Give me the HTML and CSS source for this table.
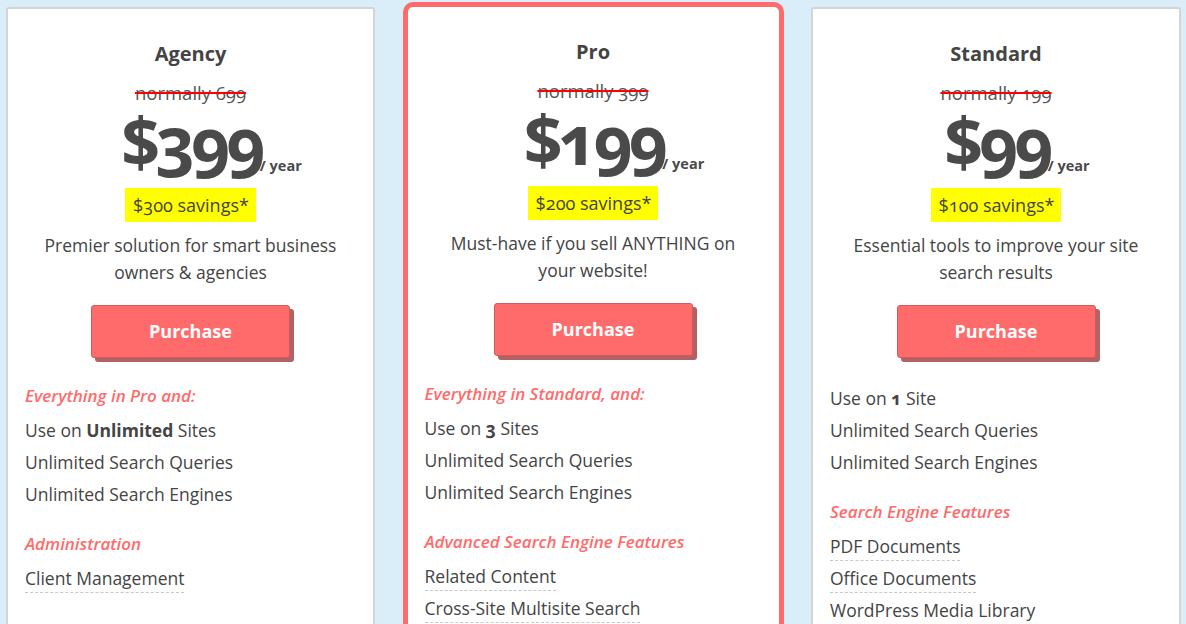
FILE: index.html
```html
<!DOCTYPE html>
<html lang="en">
<head>
<meta charset="utf-8">
<title>Pricing</title>
<link rel="stylesheet" href="styles.css">
</head>
<body>
<div class="plans">
  <section class="plan">
    <header class="plan-head">
      <h2 class="plan-name">Agency</h2>
      <div class="was"><s>normally 699</s></div>
      <div class="price"><span class="amount">$399</span><span class="per">/ year</span></div>
      <span class="save">$300 savings*</span>
      <p class="desc">Premier solution for smart business owners &amp; agencies</p>
      <a class="buy" href="#">Purchase</a>
    </header>
    <div class="features">
      <div class="group">
        <h3 class="group-title">Everything in Pro and:</h3>
        <ul class="items">
          <li><span>Use on <b>Unlimited</b> Sites</span></li>
          <li><span>Unlimited Search Queries</span></li>
          <li><span>Unlimited Search Engines</span></li>
        </ul>
      </div>
      <div class="group">
        <h3 class="group-title">Administration</h3>
        <ul class="items">
          <li class="tip"><span>Client Management</span></li>
        </ul>
      </div>
    </div>
  </section>

  <section class="plan featured">
    <header class="plan-head">
      <h2 class="plan-name">Pro</h2>
      <div class="was"><s>normally 399</s></div>
      <div class="price"><span class="amount">$199</span><span class="per">/ year</span></div>
      <span class="save">$200 savings*</span>
      <p class="desc">Must-have if you sell ANYTHING on your website!</p>
      <a class="buy" href="#">Purchase</a>
    </header>
    <div class="features">
      <div class="group">
        <h3 class="group-title">Everything in Standard, and:</h3>
        <ul class="items">
          <li><span>Use on <b>3</b> Sites</span></li>
          <li><span>Unlimited Search Queries</span></li>
          <li><span>Unlimited Search Engines</span></li>
        </ul>
      </div>
      <div class="group">
        <h3 class="group-title">Advanced Search Engine Features</h3>
        <ul class="items">
          <li class="tip"><span>Related Content</span></li>
          <li class="tip"><span>Cross-Site Multisite Search</span></li>
        </ul>
      </div>
    </div>
  </section>

  <section class="plan">
    <header class="plan-head">
      <h2 class="plan-name">Standard</h2>
      <div class="was"><s>normally 199</s></div>
      <div class="price"><span class="amount">$99</span><span class="per">/ year</span></div>
      <span class="save">$100 savings*</span>
      <p class="desc">Essential tools to improve your site search results</p>
      <a class="buy" href="#">Purchase</a>
    </header>
    <div class="features">
      <div class="group plain">
        <ul class="items">
          <li><span>Use on <b>1</b> Site</span></li>
          <li><span>Unlimited Search Queries</span></li>
          <li><span>Unlimited Search Engines</span></li>
        </ul>
      </div>
      <div class="group">
        <h3 class="group-title">Search Engine Features</h3>
        <ul class="items">
          <li class="tip"><span>PDF Documents</span></li>
          <li class="tip"><span>Office Documents</span></li>
          <li class="tip"><span>WordPress Media Library</span></li>
        </ul>
      </div>
    </div>
  </section>
</div>
</body>
</html>
```

FILE: styles.css
```css
html, body {
  margin: 0;
  padding: 0;
  height: 100%;
  overflow: hidden;
  background: #daeefa;
}

body {
  font-family: "Open Sans", "Noto Sans", sans-serif;
  color: #444;
  font-variant-numeric: oldstyle-nums;
}

.plans {
  display: grid;
  grid-template-columns: 369px 381px 1fr;
  column-gap: 27.5px;
  padding: 7px 5px 0 6px;
  align-items: stretch;
}

.plan {
  box-sizing: border-box;
  background: #fff;
  border: 2px solid #d4d4d4;
  border-radius: 3px;
  min-height: 680px;
}

.plan.featured {
  border: 5px solid #ff6b6b;
  border-radius: 10px;
  margin-top: -5px;
}

.plan-head {
  display: flex;
  flex-direction: column;
  align-items: center;
  padding: 31px 12px 0;
  text-align: center;
}

.plan-name {
  margin: 0;
  font-size: 20px;
  line-height: 28px;
  font-weight: 700;
  color: #444;
}

.was {
  margin-top: 12px;
  font-size: 18.5px;
  line-height: 26px;
  color: #555;
}

.was s {
  text-decoration: line-through;
  text-decoration-color: #f00;
  text-decoration-thickness: 2px;
}

.price {
  margin-top: 1px;
  font-size: 68px;
  line-height: 68px;
  white-space: nowrap;
}

.amount {
  font-weight: 700;
  letter-spacing: -4px;
  color: #4a4a4a;
}

.per {
  display: inline-block;
  width: 0;
  margin-left: -2px;
  font-size: 14.5px;
  line-height: 16px;
  font-weight: 700;
  color: #4a4a4a;
  vertical-align: -4px;
  text-align: left;
  letter-spacing: 0;
}

.save {
  margin-top: 13px;
  padding: 5px 7px 5px 8px;
  background: #ffff00;
  font-size: 18px;
  line-height: 24px;
  color: #444;
}

.desc {
  max-width: 305px;
  margin: 10px 0 0;
  font-size: 17.5px;
  line-height: 27px;
  color: #444;
}

.buy {
  box-sizing: border-box;
  margin-top: 19px;
  width: 199px;
  height: 53px;
  line-height: 51px;
  background: #ff6b6b;
  border: 1px solid #cf5c5c;
  border-radius: 3px;
  box-shadow: 4px 4px 0 #b26262;
  color: #fff;
  font-size: 18px;
  font-weight: 700;
  text-decoration: none;
}

.features {
  display: flex;
  flex-direction: column;
  gap: 23px;
  margin-top: 26px;
  padding: 0 17px;
}

.group.plain {
  padding-top: 2px;
}

.group-title {
  margin: 0 0 10px;
  font-size: 17px;
  line-height: 24px;
  font-style: italic;
  font-weight: 600;
  color: #ff6b6b;
}

.items {
  display: flex;
  flex-direction: column;
  gap: 5px;
  list-style: none;
  margin: 0;
  padding: 0;
}

.items li {
  font-size: 17.5px;
  line-height: 24px;
}

.items li span {
  display: inline-block;
  padding-bottom: 2px;
  border-bottom: 1px dashed transparent;
}

.items li.tip span {
  border-bottom-color: #c8c8c8;
}

.items b {
  font-weight: 700;
}
```
